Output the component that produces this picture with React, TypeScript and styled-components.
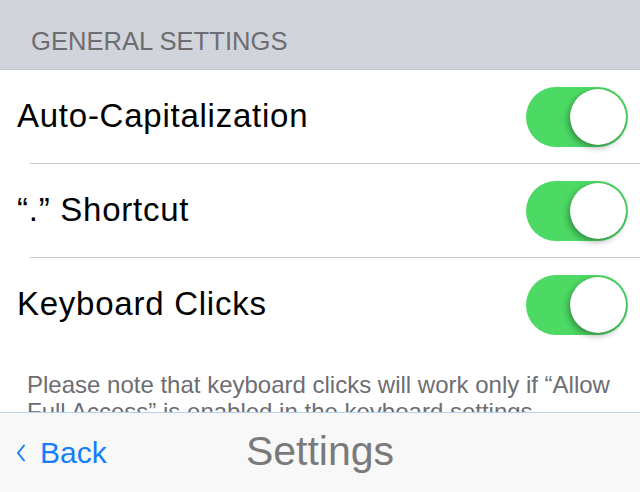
import React from "react";
import styled, { createGlobalStyle } from "styled-components";

const Global = createGlobalStyle`
  html, body { margin: 0; padding: 0; background: #fff; }
  body { font-family: "Liberation Sans", Arial, sans-serif; overflow: hidden; }
`;

const Page = styled.div`
  width: 640px;
  height: 492px;
  display: flex;
  flex-direction: column;
  overflow: hidden;
  background: #fff;
`;

const Content = styled.div`
  flex: 1;
  min-height: 0;
  overflow: hidden;
  display: flex;
  flex-direction: column;
`;

const SectionHeader = styled.div`
  height: 70px;
  box-sizing: border-box;
  flex-shrink: 0;
  background: #d1d5db;
  border-bottom: 1px solid #c4c6cb;
  padding: 29px 0 0 31px;
  font-size: 25.6px;
  line-height: 25px;
  color: #6d6d72;
`;

const Row = styled.div<{ $last?: boolean }>`
  height: 93px;
  flex-shrink: 0;
  box-sizing: border-box;
  display: flex;
  align-items: center;
  justify-content: space-between;
  padding: 0 12px 0 17px;
  position: relative;
  &::after {
    content: "";
    display: ${(p) => (p.$last ? "none" : "block")};
    position: absolute;
    left: 30px;
    right: 0;
    bottom: -1px;
    height: 1px;
    background: #c8c7cc;
  }
  & + & {
    margin-top: 1px;
  }
`;

const Label = styled.span`
  font-size: 33px;
  letter-spacing: 0.75px;
  color: #000;
  padding-bottom: 1px;
`;

const Track = styled.div<{ $on: boolean }>`
  width: 102px;
  height: 60px;
  border-radius: 30px;
  background: ${(p) => (p.$on ? "#4cd964" : "#e5e5ea")};
  display: flex;
  align-items: center;
  justify-content: ${(p) => (p.$on ? "flex-end" : "flex-start")};
  padding: 0 2px;
  box-sizing: border-box;
`;

const Knob = styled.div`
  width: 56px;
  height: 56px;
  border-radius: 50%;
  background: #fff;
  box-shadow: -2px 3px 6px rgba(0, 0, 0, 0.32), 0 0 1px rgba(0, 0, 0, 0.3);
`;

const Note = styled.p`
  margin: 0;
  padding: 20px 20px 0 27px;
  font-size: 24px;
  line-height: 27px;
  color: #6d6d72;
`;

const Toolbar = styled.div`
  height: 80px;
  flex-shrink: 0;
  box-sizing: border-box;
  border-top: 1px solid #b5d3f0;
  background: #f8f8f8;
  display: grid;
  grid-template-columns: 1fr auto 1fr;
  align-items: center;
`;

const BackButton = styled.div`
  display: flex;
  align-items: center;
  gap: 14px;
  padding-left: 16px;
  color: #147efb;
  font-size: 30px;
`;

const Title = styled.div`
  font-size: 41px;
  color: #7a7a7a;
  padding-bottom: 2px;
`;

const Toggle = ({ on }: { on: boolean }) => (
  <Track $on={on}>
    <Knob />
  </Track>
);

const rows = ["Auto-Capitalization", "\u201C.\u201D Shortcut", "Keyboard Clicks"];

export default function App() {
  return (
    <Page>
      <Global />
      <Content>
        <SectionHeader>GENERAL SETTINGS</SectionHeader>
        {rows.map((r, i) => (
          <Row key={r} $last={i === rows.length - 1}>
            <Label>{r}</Label>
            <Toggle on />
          </Row>
        ))}
        <Note>
          Please note that keyboard clicks will work only if “Allow Full Access” is enabled in the
          keyboard settings.
        </Note>
      </Content>
      <Toolbar>
        <BackButton>
          <svg width="10" height="18" viewBox="0 0 10 18">
            <path d="M8 1.5 L2 9 L8 16.5" fill="none" stroke="#147efb" strokeWidth="2" strokeLinecap="round" strokeLinejoin="round" />
          </svg>
          Back
        </BackButton>
        <Title>Settings</Title>
        <div />
      </Toolbar>
    </Page>
  );
}
